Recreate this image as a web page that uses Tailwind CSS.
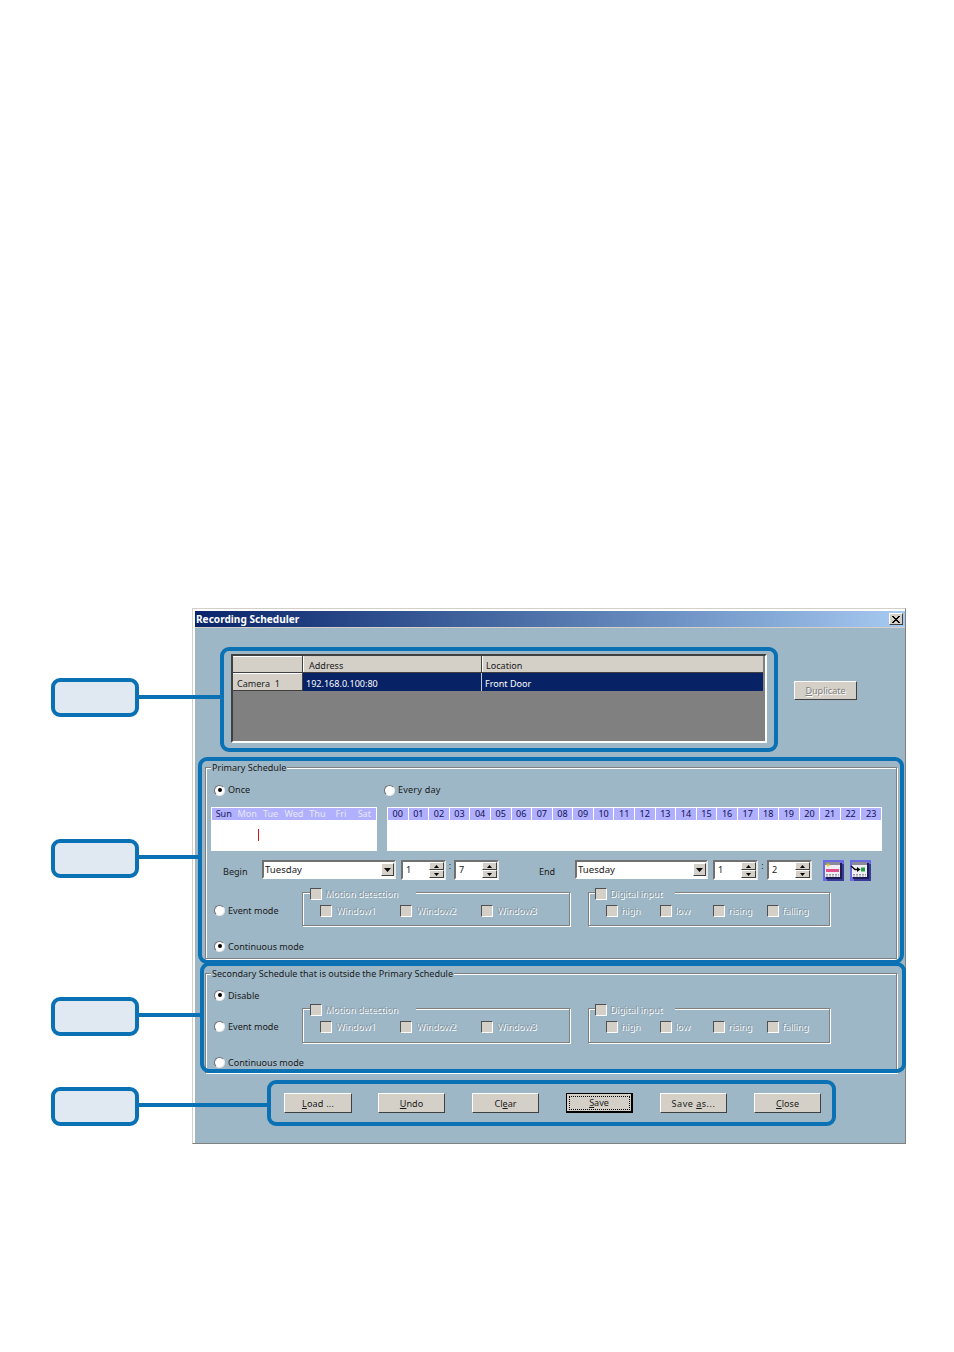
<!doctype html>
<html><head><meta charset="utf-8"><script src="https://cdn.jsdelivr.net/npm/@tailwindcss/browser@4"></script></head>
<body class="bg-white">
<div class="relative w-[954px] h-[1352px] overflow-hidden pt-[608px] font-['Noto_Sans',sans-serif] text-[9.05px] leading-[12px] text-[#1a1a1a]">
  <!-- window -->
  <div class="ml-[192px] w-[714px] h-[536px] bg-[#9db7c6] border border-[#d4d0c8] border-r-[#808080] border-b-[#808080] shadow-[inset_1px_1px_0_#fff,inset_2px_2px_0_#fff]">
    <div class="ml-[2px] mt-[2px] h-[17px] flex items-center justify-between pl-[1px] pr-[2px] bg-gradient-to-r from-[#0a246a] to-[#a6caf0] border-b border-[#d4d0c8]">
      <span class="text-white font-bold text-[10.1px]">Recording Scheduler</span>
      <span class="w-[14px] h-[12px] bg-[#d4d0c8] border border-[#fff] border-r-[#404040] border-b-[#404040] flex items-center justify-center">
        <svg width="8" height="7" viewBox="0 0 8 7"><path d="M0 0l7 7M1 0l7 7M7 0L0 7M8 0L1 7" stroke="#000" stroke-width="1" fill="none"/></svg>
      </span>
    </div>
    <!-- camera table row -->
    <div class="flex items-start pl-[38px] pt-[26px]">
      <div class="w-[536px] h-[89px] bg-[#808080] border-2 border-[#404040] border-r-white border-b-white">
        <div class="flex h-[17px] bg-[#d4d0c8] border-b border-[#404040] mr-[2px]">
          <div class="w-[70px] border-r border-[#404040] shadow-[inset_0_1px_0_#fff]"></div>
          <div class="w-[179px] pl-[5px] pt-[3px] border-r border-[#404040] border-l border-l-white flex items-center">Address</div>
          <div class="flex-1 pl-[3px] pt-[3px] border-l border-l-white flex items-center">Location</div>
        </div>
        <div class="flex h-[18px] bg-[#082266] text-white mr-[2px]">
          <div class="w-[70px] bg-[#d4d0c8] text-[#1a1a1a] pl-[4px] pt-[4px] flex items-center border-b border-r border-[#404040] shadow-[inset_0_1px_0_#fff]">Camera&nbsp; 1</div>
          <div class="w-[179px] pl-[3px] pt-[3px] border-r border-[#c9c9d6] flex items-center">192.168.0.100:80</div>
          <div class="flex-1 pl-[3px] pt-[3px] flex items-center">Front Door</div>
        </div>
      </div>
      <button class="ml-[27px] mt-[27px] w-[63px] h-[19px] bg-[#d4d0c8] border border-white border-r-[#404040] border-b-[#404040] text-[#808080] [text-shadow:1px_1px_0_#fff] text-center"><u>D</u>uplicate</button>
    </div>

    <!-- primary schedule -->
    <div class="relative ml-[12px] mt-[24px] w-[692px] h-[192px] border border-[#808080] shadow-[inset_1px_1px_0_#fff,1px_1px_0_#fff] pl-[5px] pt-[16px]">
      <span class="absolute -top-[6px] left-[5px] px-[1px] bg-[#9db7c6]">Primary Schedule</span>
      <div class="flex items-center h-[12px]">
        <label class="flex items-center gap-[3px] w-[173px] pl-[3px]">
          <span class="w-[11px] h-[11px] rounded-full bg-white border border-[#707070] border-r-[#e8e8e8] border-b-[#e8e8e8] flex items-center justify-center"><span class="w-[4px] h-[4px] rounded-full bg-black"></span></span>Once</label>
        <label class="flex items-center gap-[3px]">
          <span class="w-[11px] h-[11px] rounded-full bg-white border border-[#707070] border-r-[#e8e8e8] border-b-[#e8e8e8]"></span><span class="tracking-[0.2px]">Every day</span></label>
      </div>
      <div class="flex gap-[10px] mt-[11px]">
        <div class="relative w-[166px] h-[44px] bg-white p-[1px]">
          <div class="grid grid-cols-7 h-[12px] bg-[#b0b0ff] text-[#e6e8f4] text-center">
            <span class="text-[#1a1a5a]">Sun</span><span>Mon</span><span>Tue</span><span>Wed</span><span>Thu</span><span>Fri</span><span>Sat</span>
          </div>
          <div class="absolute left-[47px] top-[22px] w-[1px] h-[12px] bg-[#e01010]"></div>
        </div>
        <div class="w-[495px] h-[44px] bg-white p-[1px]">
          <div class="grid grid-cols-[repeat(24,1fr)] gap-x-[1px] h-[12px] text-center text-[#101050]">
            <span class="bg-[#b0b0ff]">00</span><span class="bg-[#b0b0ff]">01</span><span class="bg-[#b0b0ff]">02</span><span class="bg-[#b0b0ff]">03</span><span class="bg-[#b0b0ff]">04</span><span class="bg-[#b0b0ff]">05</span><span class="bg-[#b0b0ff]">06</span><span class="bg-[#b0b0ff]">07</span><span class="bg-[#b0b0ff]">08</span><span class="bg-[#b0b0ff]">09</span><span class="bg-[#b0b0ff]">10</span><span class="bg-[#b0b0ff]">11</span><span class="bg-[#b0b0ff]">12</span><span class="bg-[#b0b0ff]">13</span><span class="bg-[#b0b0ff]">14</span><span class="bg-[#b0b0ff]">15</span><span class="bg-[#b0b0ff]">16</span><span class="bg-[#b0b0ff]">17</span><span class="bg-[#b0b0ff]">18</span><span class="bg-[#b0b0ff]">19</span><span class="bg-[#b0b0ff]">20</span><span class="bg-[#b0b0ff]">21</span><span class="bg-[#b0b0ff]">22</span><span class="bg-[#b0b0ff]">23</span>
          </div>
        </div>
      </div>
      <!-- begin / end row -->
      <div class="flex items-start h-[21px] mt-[9px]">
        <span class="w-[51px] pl-[12px] mt-[6px]">Begin</span>
        <div class="w-[134px] h-[19px] bg-white border-2 border-[#707070] border-r-[#e8e8e8] border-b-white flex items-center justify-between pl-[1px] text-[9.6px]">Tuesday
          <span class="w-[13px] h-[13px] bg-[#d4d0c8] border border-white border-r-[#404040] border-b-[#404040] flex items-center justify-center"><svg width="7" height="4" viewBox="0 0 7 4"><path d="M0 0h7L3.5 4z" fill="#000"/></svg></span></div>
        <div class="ml-[5px] w-[45px] h-[20px] bg-white border-2 border-[#707070] border-r-[#e8e8e8] border-b-white flex items-center justify-between pl-[3px]">1
          <span class="w-[15px] h-[16px] flex flex-col">
            <span class="h-[8px] bg-[#d4d0c8] border border-white border-r-[#404040] border-b-[#404040] flex items-center justify-center"><svg width="5" height="3" viewBox="0 0 5 3"><path d="M0 3h5L2.5 0z" fill="#000"/></svg></span>
            <span class="h-[8px] bg-[#d4d0c8] border border-white border-r-[#404040] border-b-[#404040] flex items-center justify-center"><svg width="5" height="3" viewBox="0 0 5 3"><path d="M0 0h5L2.5 3z" fill="#000"/></svg></span>
          </span></div>
        <span class="w-[8px] text-center">:</span>
        <div class="w-[45px] h-[20px] bg-white border-2 border-[#707070] border-r-[#e8e8e8] border-b-white flex items-center justify-between pl-[3px]">7
          <span class="w-[15px] h-[16px] flex flex-col">
            <span class="h-[8px] bg-[#d4d0c8] border border-white border-r-[#404040] border-b-[#404040] flex items-center justify-center"><svg width="5" height="3" viewBox="0 0 5 3"><path d="M0 3h5L2.5 0z" fill="#000"/></svg></span>
            <span class="h-[8px] bg-[#d4d0c8] border border-white border-r-[#404040] border-b-[#404040] flex items-center justify-center"><svg width="5" height="3" viewBox="0 0 5 3"><path d="M0 0h5L2.5 3z" fill="#000"/></svg></span>
          </span></div>
        <span class="w-[76px] pl-[40px] mt-[6px]">End</span>
        <div class="w-[133px] h-[19px] bg-white border-2 border-[#707070] border-r-[#e8e8e8] border-b-white flex items-center justify-between pl-[1px] text-[9.6px]">Tuesday
          <span class="w-[13px] h-[13px] bg-[#d4d0c8] border border-white border-r-[#404040] border-b-[#404040] flex items-center justify-center"><svg width="7" height="4" viewBox="0 0 7 4"><path d="M0 0h7L3.5 4z" fill="#000"/></svg></span></div>
        <div class="ml-[5px] w-[45px] h-[20px] bg-white border-2 border-[#707070] border-r-[#e8e8e8] border-b-white flex items-center justify-between pl-[3px]">1
          <span class="w-[15px] h-[16px] flex flex-col">
            <span class="h-[8px] bg-[#d4d0c8] border border-white border-r-[#404040] border-b-[#404040] flex items-center justify-center"><svg width="5" height="3" viewBox="0 0 5 3"><path d="M0 3h5L2.5 0z" fill="#000"/></svg></span>
            <span class="h-[8px] bg-[#d4d0c8] border border-white border-r-[#404040] border-b-[#404040] flex items-center justify-center"><svg width="5" height="3" viewBox="0 0 5 3"><path d="M0 0h5L2.5 3z" fill="#000"/></svg></span>
          </span></div>
        <span class="w-[9px] text-center">:</span>
        <div class="w-[45px] h-[20px] bg-white border-2 border-[#707070] border-r-[#e8e8e8] border-b-white flex items-center justify-between pl-[3px]">2
          <span class="w-[15px] h-[16px] flex flex-col">
            <span class="h-[8px] bg-[#d4d0c8] border border-white border-r-[#404040] border-b-[#404040] flex items-center justify-center"><svg width="5" height="3" viewBox="0 0 5 3"><path d="M0 3h5L2.5 0z" fill="#000"/></svg></span>
            <span class="h-[8px] bg-[#d4d0c8] border border-white border-r-[#404040] border-b-[#404040] flex items-center justify-center"><svg width="5" height="3" viewBox="0 0 5 3"><path d="M0 0h5L2.5 3z" fill="#000"/></svg></span>
          </span></div>
        <svg class="ml-[11px]" width="21" height="21" viewBox="0 0 21 21"><rect width="21" height="21" fill="#6a6ae2"/><rect x="4" y="4" width="17" height="17" fill="#3a3a9a"/><rect x="3" y="3" width="16" height="16" fill="#1c1c50"/><rect x="2" y="2" width="15" height="15" fill="#eeeef4"/><rect x="2" y="2" width="15" height="3" fill="#8a8a98"/><path d="M3 14.500h13M3 16h13" stroke="#9a9aa8" stroke-width="1" stroke-dasharray="2 1"/><rect x="3" y="9" width="13" height="3" fill="#e0508a"/><path d="M5 3l1 1.500 1.500 .5-1.500 .5-1 1.500-1-1.500-1.500-.5 1.500-.5z" fill="#e8c820"/></svg>
        <svg class="ml-[6px]" width="21" height="21" viewBox="0 0 21 21"><rect width="21" height="21" fill="#6a6ae2"/><rect x="4" y="4" width="17" height="17" fill="#3a3a9a"/><rect x="3" y="3" width="16" height="16" fill="#1c1c50"/><rect x="2" y="2" width="15" height="15" fill="#eeeef4"/><rect x="2" y="2" width="15" height="3" fill="#8a8a98"/><path d="M3 14.500h13M3 16h13" stroke="#9a9aa8" stroke-width="1" stroke-dasharray="2 1"/><path d="M1 6l4 3.500h3" stroke="#000" stroke-width="1.300" fill="none"/><path d="M7 7l3.500 2.500-3.500 2.500z" fill="#000"/><rect x="11" y="7.500" width="4" height="4" fill="#20a040"/></svg>
      </div>
      <!-- event row -->
      <div class="flex items-center h-[34px] mt-[11px] pl-[3px]">
        <label class="flex items-center gap-[3px] w-[88px] mt-[2px]">
          <span class="w-[11px] h-[11px] rounded-full bg-white border border-[#707070] border-r-[#e8e8e8] border-b-[#e8e8e8]"></span><span class="translate-y-px">Event mode</span></label>
        <div class="relative w-[268px] h-[34px] border border-[#808080] shadow-[inset_1px_1px_0_#fff,1px_1px_0_#fff] flex items-center gap-[25px] pl-[17px] pt-[4px] text-[#8a9aa6] [text-shadow:1px_1px_0_#fff]">
          <span class="absolute -top-[5px] left-[7px] pr-[18px] bg-[#9db7c6] flex items-center gap-[3px]"><span class="w-[12px] h-[12px] bg-[#d4d0c8] border border-[#505050] border-r-white border-b-white"></span>Motion detection</span>
          <span class="flex items-center gap-[4px]"><span class="w-[12px] h-[12px] bg-[#d4d0c8] border border-[#505050] border-r-white border-b-white"></span>Window1</span>
          <span class="flex items-center gap-[4px]"><span class="w-[12px] h-[12px] bg-[#d4d0c8] border border-[#505050] border-r-white border-b-white"></span>Window2</span>
          <span class="flex items-center gap-[4px]"><span class="w-[12px] h-[12px] bg-[#d4d0c8] border border-[#505050] border-r-white border-b-white"></span>Window3</span>
        </div>
        <div class="relative ml-[18px] w-[242px] h-[34px] border border-[#808080] shadow-[inset_1px_1px_0_#fff,1px_1px_0_#fff] flex items-center pl-[17px] pt-[4px] text-[#8a9aa6] [text-shadow:1px_1px_0_#fff]">
          <span class="absolute -top-[5px] left-[6px] pr-[13px] bg-[#9db7c6] flex items-center gap-[3px]"><span class="w-[12px] h-[12px] bg-[#d4d0c8] border border-[#505050] border-r-white border-b-white"></span>Digital input</span>
          <span class="w-[54px] flex items-center gap-[3px]"><span class="w-[12px] h-[12px] bg-[#d4d0c8] border border-[#505050] border-r-white border-b-white"></span>high</span>
          <span class="w-[53px] flex items-center gap-[3px]"><span class="w-[12px] h-[12px] bg-[#d4d0c8] border border-[#505050] border-r-white border-b-white"></span>low</span>
          <span class="w-[54px] flex items-center gap-[3px]"><span class="w-[12px] h-[12px] bg-[#d4d0c8] border border-[#505050] border-r-white border-b-white"></span>rising</span>
          <span class="flex items-center gap-[3px]"><span class="w-[12px] h-[12px] bg-[#d4d0c8] border border-[#505050] border-r-white border-b-white"></span>falling</span>
        </div>
      </div>
      <label class="flex items-center gap-[3px] h-[12px] mt-[14px] pl-[3px]">
        <span class="w-[11px] h-[11px] rounded-full bg-white border border-[#707070] border-r-[#e8e8e8] border-b-[#e8e8e8] flex items-center justify-center"><span class="w-[4px] h-[4px] rounded-full bg-black"></span></span><span class="translate-y-px">Continuous mode</span></label>
    </div>

    <!-- secondary schedule -->
    <div class="relative ml-[12px] mt-[14px] w-[692px] h-[100px] border border-[#808080] shadow-[inset_1px_1px_0_#fff,1px_1px_0_#fff] pl-[8px] pt-[15px]">
      <span class="absolute -top-[6px] left-[5px] px-[1px] bg-[#9db7c6]">Secondary Schedule that is outside the Primary Schedule</span>
      <label class="flex items-center gap-[3px] h-[12px]">
        <span class="w-[11px] h-[11px] rounded-full bg-white border border-[#707070] border-r-[#e8e8e8] border-b-[#e8e8e8] flex items-center justify-center"><span class="w-[4px] h-[4px] rounded-full bg-black"></span></span><span class="translate-y-px">Disable</span></label>
      <div class="flex items-center h-[35px] mt-[7px]">
        <label class="flex items-center gap-[3px] w-[88px] mt-[1px]">
          <span class="w-[11px] h-[11px] rounded-full bg-white border border-[#707070] border-r-[#e8e8e8] border-b-[#e8e8e8]"></span><span class="translate-y-px">Event mode</span></label>
        <div class="relative w-[268px] h-[35px] border border-[#808080] shadow-[inset_1px_1px_0_#fff,1px_1px_0_#fff] flex items-center gap-[25px] pl-[17px] pt-[2px] text-[#8a9aa6] [text-shadow:1px_1px_0_#fff]">
          <span class="absolute -top-[5px] left-[7px] pr-[18px] bg-[#9db7c6] flex items-center gap-[3px]"><span class="w-[12px] h-[12px] bg-[#d4d0c8] border border-[#505050] border-r-white border-b-white"></span>Motion detection</span>
          <span class="flex items-center gap-[4px]"><span class="w-[12px] h-[12px] bg-[#d4d0c8] border border-[#505050] border-r-white border-b-white"></span>Window1</span>
          <span class="flex items-center gap-[4px]"><span class="w-[12px] h-[12px] bg-[#d4d0c8] border border-[#505050] border-r-white border-b-white"></span>Window2</span>
          <span class="flex items-center gap-[4px]"><span class="w-[12px] h-[12px] bg-[#d4d0c8] border border-[#505050] border-r-white border-b-white"></span>Window3</span>
        </div>
        <div class="relative ml-[18px] w-[242px] h-[35px] border border-[#808080] shadow-[inset_1px_1px_0_#fff,1px_1px_0_#fff] flex items-center pl-[17px] pt-[2px] text-[#8a9aa6] [text-shadow:1px_1px_0_#fff]">
          <span class="absolute -top-[5px] left-[6px] pr-[13px] bg-[#9db7c6] flex items-center gap-[3px]"><span class="w-[12px] h-[12px] bg-[#d4d0c8] border border-[#505050] border-r-white border-b-white"></span>Digital input</span>
          <span class="w-[54px] flex items-center gap-[3px]"><span class="w-[12px] h-[12px] bg-[#d4d0c8] border border-[#505050] border-r-white border-b-white"></span>high</span>
          <span class="w-[53px] flex items-center gap-[3px]"><span class="w-[12px] h-[12px] bg-[#d4d0c8] border border-[#505050] border-r-white border-b-white"></span>low</span>
          <span class="w-[54px] flex items-center gap-[3px]"><span class="w-[12px] h-[12px] bg-[#d4d0c8] border border-[#505050] border-r-white border-b-white"></span>rising</span>
          <span class="flex items-center gap-[3px]"><span class="w-[12px] h-[12px] bg-[#d4d0c8] border border-[#505050] border-r-white border-b-white"></span>falling</span>
        </div>
      </div>
      <label class="flex items-center gap-[3px] h-[12px] mt-[13px]">
        <span class="w-[11px] h-[11px] rounded-full bg-white border border-[#707070] border-r-[#e8e8e8] border-b-[#e8e8e8]"></span><span class="translate-y-px">Continuous mode</span></label>
    </div>

    <!-- bottom buttons -->
    <div class="flex gap-[27px] ml-[91px] mt-[20px]">
      <button class="w-[68px] h-[20px] pt-[1px] bg-[#d4d0c8] border border-white border-r-[#404040] border-b-[#404040] tracking-[0.2px]"><u>L</u>oad ...</button>
      <button class="w-[67px] h-[20px] pt-[1px] bg-[#d4d0c8] border border-white border-r-[#404040] border-b-[#404040] -ml-[1px]"><u>U</u>ndo</button>
      <button class="w-[67px] h-[20px] pt-[1px] bg-[#d4d0c8] border border-white border-r-[#404040] border-b-[#404040]">Cl<u>e</u>ar</button>
      <button class="w-[67px] h-[20px] pt-[1px] bg-[#d4d0c8] border border-black border-b-2 border-r-2 outline-1 outline-dotted -outline-offset-4 outline-black"><u>S</u>ave</button>
      <button class="w-[67px] h-[20px] pt-[1px] bg-[#d4d0c8] border border-white border-r-[#404040] border-b-[#404040] tracking-[0.5px]">Save <u>a</u>s...</button>
      <button class="w-[67px] h-[20px] pt-[1px] bg-[#d4d0c8] border border-white border-r-[#404040] border-b-[#404040]"><u>C</u>lose</button>
    </div>
  </div>

  <!-- callout annotations laid over the screenshot -->
  <div class="absolute left-[220px] top-[647px] w-[558px] h-[105px] border-4 border-[#0a72b4] rounded-[9px]"></div>
  <div class="absolute left-[198px] top-[757px] w-[706px] h-[207px] border-4 border-[#0a72b4] rounded-[9px]"></div>
  <div class="absolute left-[200px] top-[962px] w-[706px] h-[111px] border-4 border-[#0a72b4] rounded-[9px]"></div>
  <div class="absolute left-[267px] top-[1080px] w-[569px] h-[46px] border-4 border-[#0a72b4] rounded-[9px]"></div>
  <div class="absolute left-[51px] top-[678px] w-[88px] h-[39px] bg-[#e0e9f2] border-4 border-[#0a72b4] rounded-[9px]"></div>
  <div class="absolute left-[51px] top-[839px] w-[88px] h-[39px] bg-[#e0e9f2] border-4 border-[#0a72b4] rounded-[9px]"></div>
  <div class="absolute left-[51px] top-[997px] w-[88px] h-[39px] bg-[#e0e9f2] border-4 border-[#0a72b4] rounded-[9px]"></div>
  <div class="absolute left-[51px] top-[1087px] w-[88px] h-[39px] bg-[#e0e9f2] border-4 border-[#0a72b4] rounded-[9px]"></div>
  <div class="absolute left-[139px] top-[695px] w-[82px] h-[4px] bg-[#0a72b4]"></div>
  <div class="absolute left-[139px] top-[855px] w-[60px] h-[4px] bg-[#0a72b4]"></div>
  <div class="absolute left-[139px] top-[1013px] w-[62px] h-[4px] bg-[#0a72b4]"></div>
  <div class="absolute left-[139px] top-[1103px] w-[129px] h-[4px] bg-[#0a72b4]"></div>
</div>
</body></html>
